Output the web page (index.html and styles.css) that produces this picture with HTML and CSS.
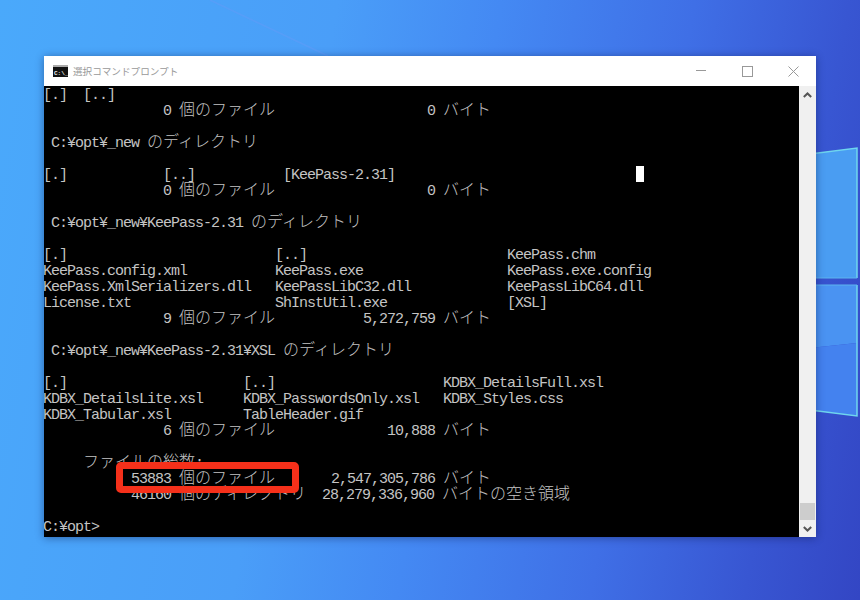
FILE: index.html
```html
<!DOCTYPE html>
<html lang="ja">
<head>
<meta charset="utf-8">
<title>選択コマンドプロンプト</title>
<link rel="stylesheet" href="styles.css">
</head>
<body>
<main class="desktop">
  <svg class="wallpaper" width="860" height="600" viewBox="0 0 860 600">
    <path d="M210 0 L328 56" stroke="#5b9df8" stroke-width="1.5" fill="none" opacity=".7"/>
    <path d="M810 154 L857 148 L857 278 L810 278 Z" fill="#4a9df2"/>
    <path d="M810 285 L857 285 L857 343 L810 348 Z" fill="#4a93f2"/>
    <path d="M810 348 L857 343 L857 416 L810 410 Z" fill="#4482ef"/>
    <path d="M810 154 L857 148 L857 278 M857 285 L857 416 L810 410" stroke="#6fd6ee" stroke-width="1.5" fill="none"/>
    <path d="M810 278 H857 M810 285 H857" stroke="#5cb4ee" stroke-width="1" fill="none"/>
  </svg>
  <section class="window">
    <header class="titlebar">
      <svg class="cmd-icon" width="15" height="12" viewBox="0 0 15 12">
        <rect width="15" height="12" fill="#111"/>
        <rect x="0" y="0" width="15" height="2" fill="#aaa"/>
        <text x="1" y="9.5" class="cmd-icon-text">C:\_</text>
      </svg>
      <span class="title">選択コマンドプロンプト</span>
      <div class="controls">
        <span class="control"><svg width="10" height="10" viewBox="0 0 10 10"><path d="M0 4.5H10" stroke="#999" fill="none"/></svg></span>
        <span class="control"><svg width="11" height="11" viewBox="0 0 11 11"><rect x=".5" y=".5" width="10" height="10" stroke="#999" fill="none"/></svg></span>
        <span class="control"><svg width="11" height="11" viewBox="0 0 11 11"><path d="M.5 .5L10.5 10.5M10.5 .5L.5 10.5" stroke="#999" fill="none"/></svg></span>
      </div>
    </header>
    <div class="body">
      <div class="console">
        <div class="row">[.]  [..]</div>
        <div class="row">               0 <span class="j">個のファイル</span>                   0 <span class="j">バイト</span></div>
        <div class="row"></div>
        <div class="row"> C:¥opt¥_new <span class="j">のディレクトリ</span></div>
        <div class="row"></div>
        <div class="row">[.]            [..]           [KeePass-2.31]</div>
        <div class="row">               0 <span class="j">個のファイル</span>                   0 <span class="j">バイト</span></div>
        <div class="row"></div>
        <div class="row"> C:¥opt¥_new¥KeePass-2.31 <span class="j">のディレクトリ</span></div>
        <div class="row"></div>
        <div class="row">[.]                          [..]                         KeePass.chm</div>
        <div class="row">KeePass.config.xml           KeePass.exe                  KeePass.exe.config</div>
        <div class="row">KeePass.XmlSerializers.dll   KeePassLibC32.dll            KeePassLibC64.dll</div>
        <div class="row">License.txt                  ShInstUtil.exe               [XSL]</div>
        <div class="row">               9 <span class="j">個のファイル</span>           5,272,759 <span class="j">バイト</span></div>
        <div class="row"></div>
        <div class="row"> C:¥opt¥_new¥KeePass-2.31¥XSL <span class="j">のディレクトリ</span></div>
        <div class="row"></div>
        <div class="row">[.]                      [..]                     KDBX_DetailsFull.xsl</div>
        <div class="row">KDBX_DetailsLite.xsl     KDBX_PasswordsOnly.xsl   KDBX_Styles.css</div>
        <div class="row">KDBX_Tabular.xsl         TableHeader.gif</div>
        <div class="row">               6 <span class="j">個のファイル</span>              10,888 <span class="j">バイト</span></div>
        <div class="row"></div>
        <div class="row">     <span class="j">ファイルの総数</span>:</div>
        <div class="row">           53883 <span class="j">個のファイル</span>       2,547,305,786 <span class="j">バイト</span></div>
        <div class="row">           46160 <span class="j">個のディレクトリ</span>  28,279,336,960 <span class="j">バイトの空き領域</span></div>
        <div class="row"></div>
        <div class="row">C:¥opt&gt;</div>
        <div class="cursor"></div>
      </div>
      <aside class="scrollbar">
        <span class="arrow"><svg width="9" height="6" viewBox="0 0 9 6"><path d="M.8 5L4.5 1.5L8.2 5" stroke="#555" stroke-width="2" fill="none"/></svg></span>
        <div class="track"><div class="thumb"></div></div>
        <span class="arrow"><svg width="9" height="6" viewBox="0 0 9 6"><path d="M.8 1L4.5 4.5L8.2 1" stroke="#555" stroke-width="2" fill="none"/></svg></span>
      </aside>
    </div>
  </section>
  <div class="highlight"></div>
</main>
</body>
</html>
```
FILE: styles.css
```css
html, body {
  margin: 0;
  padding: 0;
}
.desktop {
  position: relative;
  width: 860px;
  height: 600px;
  overflow: hidden;
  background: linear-gradient(100deg, #4aa9fb 0%, #4a9ef8 35%, #4489f3 52%, #3f6fe6 72%, #3856d2 88%, #3346c4 100%);
}
.wallpaper {
  position: absolute;
  left: 0;
  top: 0;
}
.window {
  position: absolute;
  left: 44px;
  top: 56px;
  width: 772px;
  height: 481px;
  display: flex;
  flex-direction: column;
  background: #fff;
  box-shadow: 0 1px 8px rgba(10, 20, 70, .45);
}
.titlebar {
  height: 30px;
  flex: none;
  display: flex;
  align-items: center;
  padding-left: 9px;
}
.cmd-icon {
  flex: none;
}
.cmd-icon-text {
  font: 700 6px "Liberation Mono", monospace;
  fill: #eee;
}
.title {
  margin-left: 5px;
  font: 9.6px "Noto Sans CJK JP", sans-serif;
  color: #999;
}
.controls {
  margin-left: auto;
  display: flex;
}
.control {
  width: 46px;
  height: 30px;
  display: flex;
  align-items: center;
  justify-content: center;
}
.body {
  flex: 1;
  display: flex;
  min-height: 0;
}
.console {
  position: relative;
  flex: 1;
  background: #000;
  color: #c4c4c4;
  font: 15px/19px "Liberation Mono", monospace;
  letter-spacing: -1px;
  overflow: hidden;
}
.row {
  height: 16px;
  white-space: pre;
  text-indent: -1px;
}
.j {
  font: 300 16px/0 "Noto Sans CJK JP", sans-serif;
  letter-spacing: 0;
  vertical-align: 0;
}
.cursor {
  position: absolute;
  left: 592px;
  top: 80px;
  width: 8px;
  height: 16px;
  background: #fff;
}
.scrollbar {
  width: 17px;
  flex: none;
  display: flex;
  flex-direction: column;
  background: #f0f0f0;
}
.arrow {
  height: 17px;
  flex: none;
  display: flex;
  align-items: center;
  justify-content: center;
}
.track {
  flex: 1;
  display: flex;
  flex-direction: column;
  justify-content: flex-end;
  align-items: center;
}
.thumb {
  width: 15px;
  height: 17px;
  background: #cdcdcd;
}
.highlight {
  position: absolute;
  left: 116px;
  top: 462px;
  width: 169px;
  height: 17px;
  border: 7px solid #f5301a;
  border-radius: 5px;
}
```
